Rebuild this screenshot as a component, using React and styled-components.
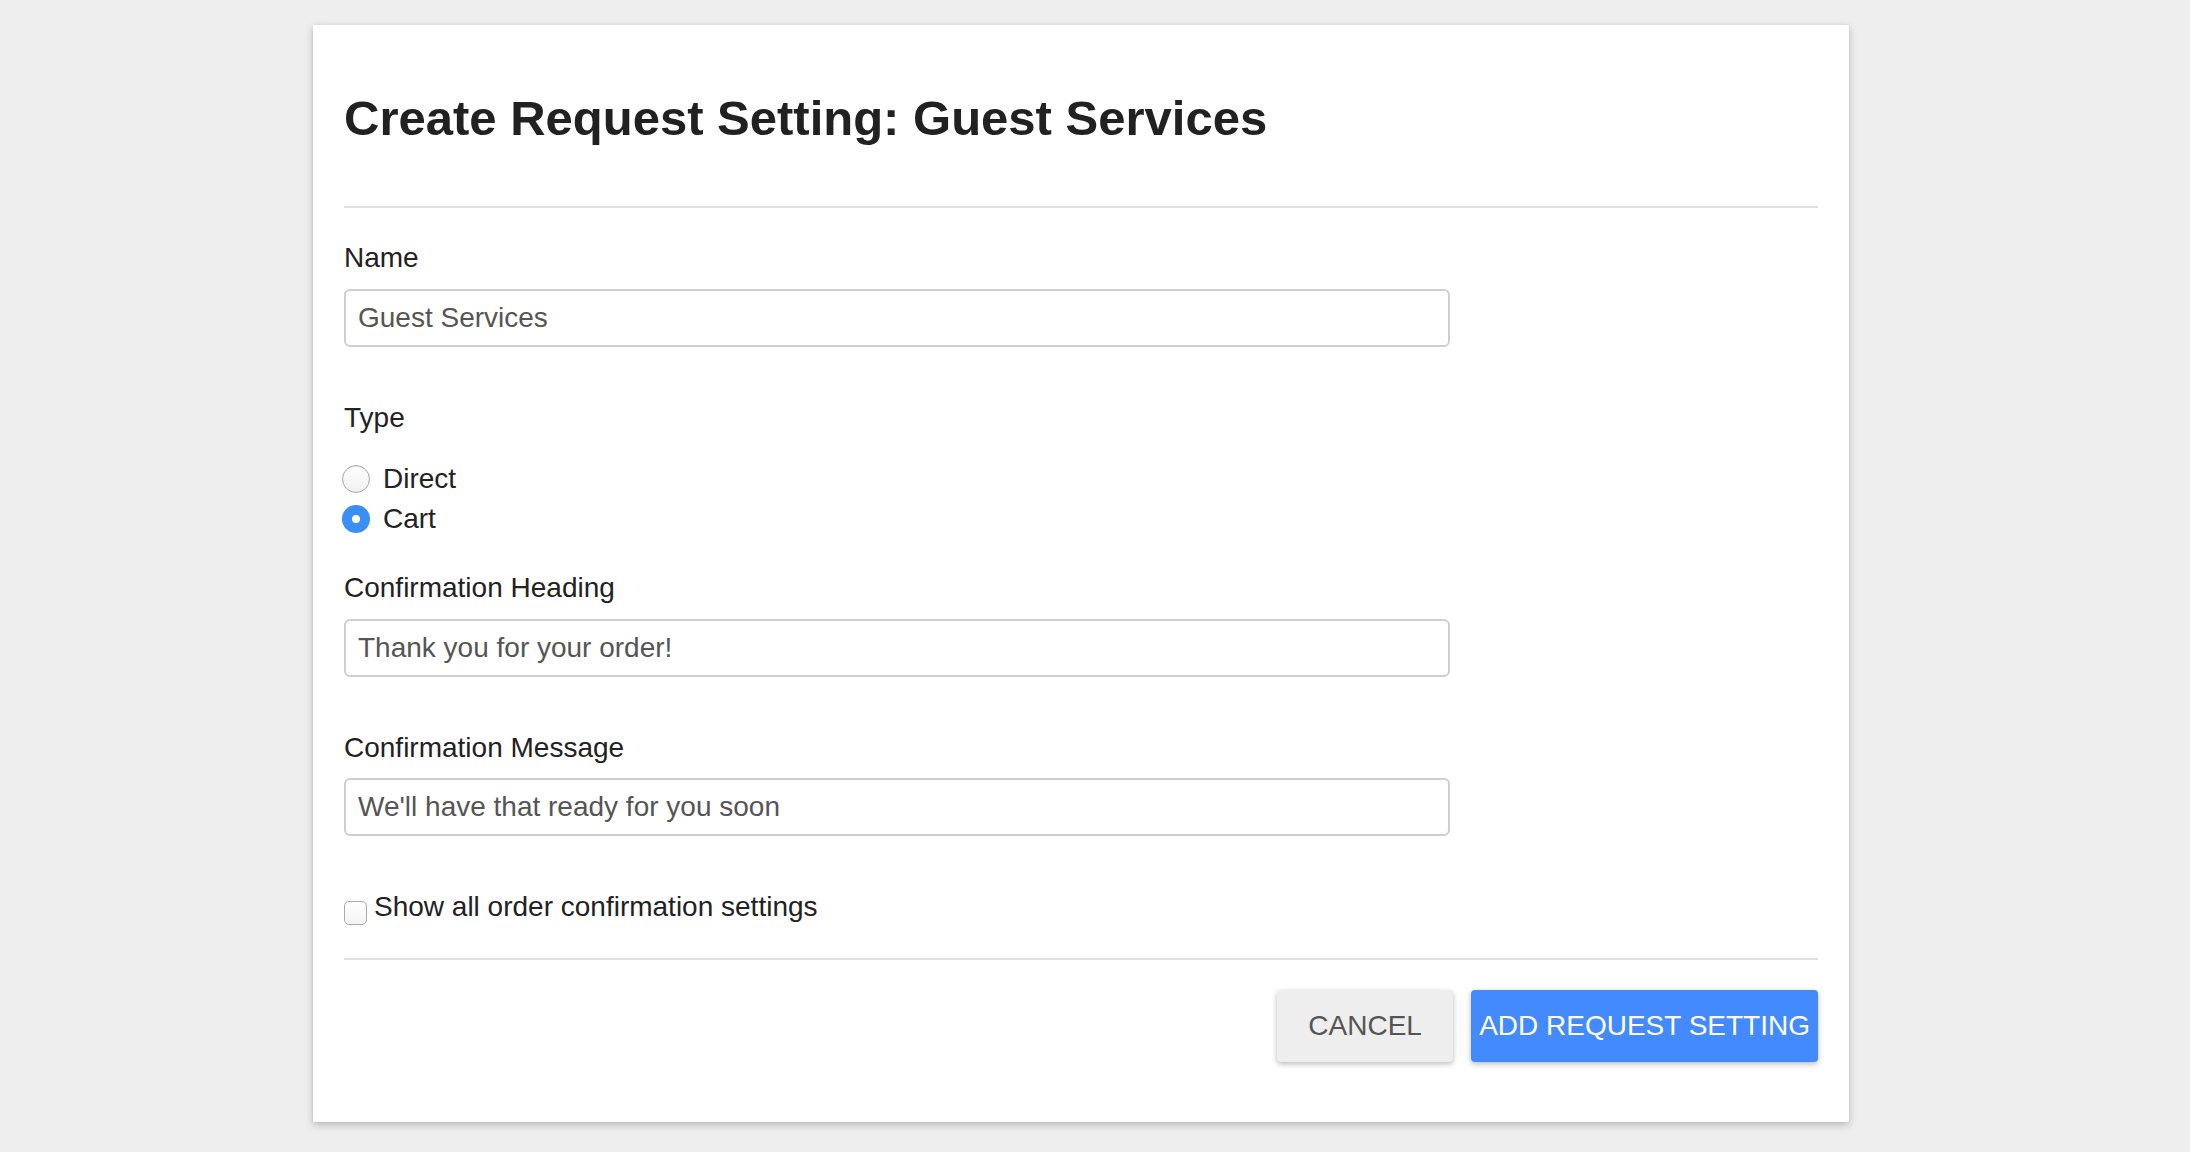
import React from 'react'
import styled, { createGlobalStyle } from 'styled-components'

const GlobalStyle = createGlobalStyle`
  html, body {
    margin: 0;
    padding: 0;
    background: #eeeeee;
    font-family: 'Liberation Sans', Arial, sans-serif;
  }
`

const Page = styled.div`
  min-height: 1152px;
  padding: 25px 0 0 313px;
  box-sizing: border-box;
`

const Card = styled.form`
  width: 1536px;
  box-sizing: border-box;
  background: #ffffff;
  padding: 65px 31px 60px;
  box-shadow: 0 3px 8px rgba(0, 0, 0, 0.22), 0 0 2px rgba(0, 0, 0, 0.08);
`

const Title = styled.h1`
  margin: 0;
  font-size: 49px;
  line-height: 56px;
  font-weight: 700;
  color: #212121;
`

const Divider = styled.hr`
  border: 0;
  height: 2px;
  background: #e0e0e0;
  margin: ${({ top }) => top}px 0 0;
`

const Field = styled.div`
  display: flex;
  flex-direction: column;
  margin-top: ${({ top }) => top}px;
`

const Label = styled.label`
  font-size: 28px;
  line-height: 32px;
  color: #222222;
`

const Input = styled.input`
  width: 75%;
  height: 58px;
  box-sizing: border-box;
  margin-top: ${({ gap = 15 }) => gap}px;
  padding: 0 12px;
  border: 2px solid #cfcfcf;
  border-radius: 6px;
  font-family: 'Liberation Sans', Arial, sans-serif;
  font-size: 28px;
  color: #555555;
  outline: none;
`

const RadioGroup = styled.div`
  display: flex;
  flex-direction: column;
  margin-top: 25px;
`

const RadioRow = styled.label`
  display: flex;
  align-items: center;
  height: 40px;
  margin-left: -2px;
  font-size: 28px;
  color: #222222;
`

const RadioDot = styled.span`
  width: 28px;
  height: 28px;
  box-sizing: border-box;
  border-radius: 50%;
  margin-right: 13px;
  display: flex;
  align-items: center;
  justify-content: center;
  border: ${({ checked }) => (checked ? 'none' : '1px solid #aaaaaa')};
  background: ${({ checked }) =>
    checked ? '#3a8ff6' : 'linear-gradient(#ffffff, #f2f2f2)'};
  box-shadow: ${({ checked }) =>
    checked ? 'none' : 'inset 0 1px 1px rgba(0, 0, 0, 0.08)'};

  &::after {
    content: '';
    display: ${({ checked }) => (checked ? 'block' : 'none')};
    width: 8px;
    height: 8px;
    border-radius: 50%;
    background: #ffffff;
  }
`

const CheckRow = styled.label`
  display: flex;
  align-items: flex-start;
  margin-top: 55px;
  font-size: 28px;
  line-height: 32px;
  color: #222222;
`

const CheckBox = styled.span`
  width: 23px;
  height: 24px;
  box-sizing: border-box;
  margin: 10px 7px 0 0;
  border: 1px solid #aaaaaa;
  border-radius: 5px;
  background: linear-gradient(#ffffff, #f4f4f4);
`

const Actions = styled.div`
  display: flex;
  justify-content: flex-end;
  gap: 18px;
  margin-top: 30px;
`

const Button = styled.button`
  height: 72px;
  min-width: 176px;
  padding: 0 8px;
  border: 0;
  border-radius: 4px;
  font-family: 'Liberation Sans', Arial, sans-serif;
  font-size: 28px;
  text-transform: uppercase;
  cursor: pointer;
  color: ${({ primary }) => (primary ? '#ffffff' : '#555555')};
  background: ${({ primary }) => (primary ? '#448aff' : '#eeeeee')};
  box-shadow: 0 2px 5px rgba(0, 0, 0, 0.2), 0 2px 8px rgba(0, 0, 0, 0.08);
`

const App = () => {
  return (
    <Page>
      <GlobalStyle />
      <Card onSubmit={e => e.preventDefault()}>
        <Title>Create Request Setting: Guest Services</Title>
        <Divider top={60} />

        <Field top={34}>
          <Label>Name</Label>
          <Input defaultValue='Guest Services' />
        </Field>

        <Field top={55}>
          <Label>Type</Label>
          <RadioGroup>
            <RadioRow>
              <RadioDot />
              Direct
            </RadioRow>
            <RadioRow>
              <RadioDot checked />
              Cart
            </RadioRow>
          </RadioGroup>
        </Field>

        <Field top={33}>
          <Label>Confirmation Heading</Label>
          <Input defaultValue='Thank you for your order!' />
        </Field>

        <Field top={55}>
          <Label>Confirmation Message</Label>
          <Input gap={14} defaultValue="We'll have that ready for you soon" />
        </Field>

        <CheckRow>
          <CheckBox />
          Show all order confirmation settings
        </CheckRow>

        <Divider top={33} />

        <Actions>
          <Button type='button'>Cancel</Button>
          <Button type='submit' primary>Add Request Setting</Button>
        </Actions>
      </Card>
    </Page>
  )
}

export default App
